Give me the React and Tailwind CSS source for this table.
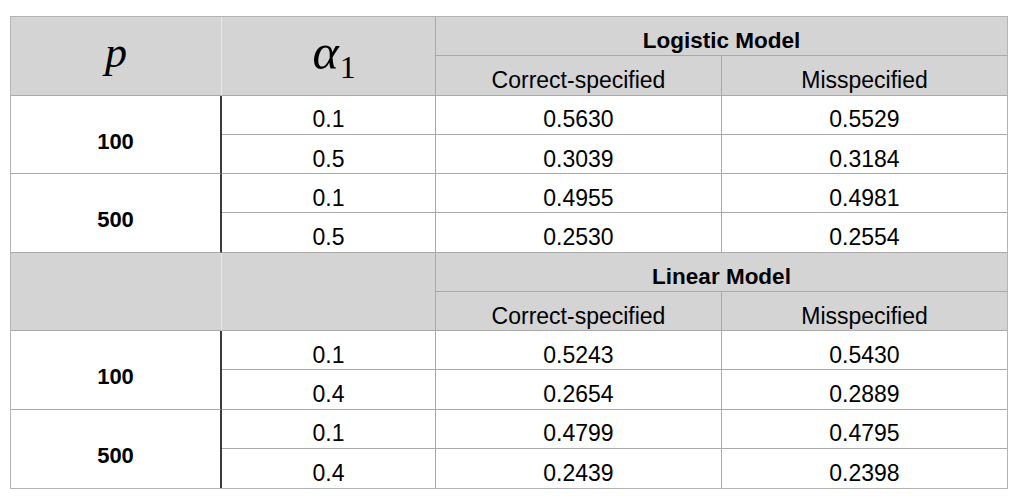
import React from "react";

const sans = { fontFamily: '"Liberation Sans", Arial, sans-serif' };
const serif = { fontFamily: '"Liberation Serif", "Times New Roman", serif' };

const groups = [
  {
    title: "Logistic Model",
    rows: [
      { p: "100", vals: [["0.1", "0.5630", "0.5529"], ["0.5", "0.3039", "0.3184"]] },
      { p: "500", vals: [["0.1", "0.4955", "0.4981"], ["0.5", "0.2530", "0.2554"]] },
    ],
  },
  {
    title: "Linear Model",
    rows: [
      { p: "100", vals: [["0.1", "0.5243", "0.5430"], ["0.4", "0.2654", "0.2889"]] },
      { p: "500", vals: [["0.1", "0.4799", "0.4795"], ["0.4", "0.2439", "0.2398"]] },
    ],
  },
];

const Header = ({ title, first }) => (
  <>
    <div className="row-span-2 bg-[#d4d4d4] border-r border-r-[#e8e8e8] border-b border-b-[#a9a9a9] flex items-center justify-center">
      {first && (
        <span className="text-[44px] italic leading-none pb-[6px]" style={serif}>
          p
        </span>
      )}
    </div>
    <div className="row-span-2 bg-[#d4d4d4] border-r border-r-[#a9a9a9] border-b border-b-[#a9a9a9] flex items-center justify-center">
      {first && (
        <span className="text-[50px] italic leading-none pb-[8px] pl-[10px]" style={serif}>
          α<sub className="not-italic text-[32px] align-baseline relative top-[9px] left-[1px]">1</sub>
        </span>
      )}
    </div>
    <div className="col-span-2 bg-[#d4d4d4] border-b border-b-[#a9a9a9] flex items-center justify-center pt-[10px] text-[22.5px] font-bold">
      {title}
    </div>
    <div className="bg-[#d4d4d4] border-r border-r-[#a9a9a9] border-b border-b-[#a9a9a9] flex items-center justify-center pt-[10px] text-[23px]">
      Correct-specified
    </div>
    <div className="bg-[#d4d4d4] border-b border-b-[#a9a9a9] flex items-center justify-center pt-[10px] text-[23px]">
      Misspecified
    </div>
  </>
);

export default function App() {
  return (
    <div className="w-[1022px] h-[504px] bg-white pt-[16px] pl-[10px] text-black" style={sans}>
      <div className="w-[998px] h-[473px] border border-[#b4b4b4] grid grid-cols-[211px_214px_286px_285px] grid-rows-12">
        {groups.map((g, gi) => (
          <React.Fragment key={g.title}>
            <Header title={g.title} first={gi === 0} />
            {g.rows.map((r, ri) => {
              const lastGroup = gi === groups.length - 1 && ri === g.rows.length - 1;
              return (
                <React.Fragment key={r.p + ri}>
                  <div className={`row-span-2 border-r-2 border-r-[#3a3a3a] flex items-center justify-center pt-[14px] text-[22px] font-bold ${lastGroup ? "" : "border-b border-b-[#a9a9a9]"}`}>
                    {r.p}
                  </div>
                  {r.vals.map((v, vi) => {
                    const bottom = lastGroup && vi === 1 ? "" : "border-b border-b-[#a9a9a9]";
                    return (
                      <React.Fragment key={vi}>
                        <div className={`border-r border-r-[#a9a9a9] ${bottom} flex items-center justify-center pt-[10px] text-[23px]`}>{v[0]}</div>
                        <div className={`border-r border-r-[#a9a9a9] ${bottom} flex items-center justify-center pt-[10px] text-[23px]`}>{v[1]}</div>
                        <div className={`${bottom} flex items-center justify-center pt-[10px] text-[23px]`}>{v[2]}</div>
                      </React.Fragment>
                    );
                  })}
                </React.Fragment>
              );
            })}
          </React.Fragment>
        ))}
      </div>
    </div>
  );
}
